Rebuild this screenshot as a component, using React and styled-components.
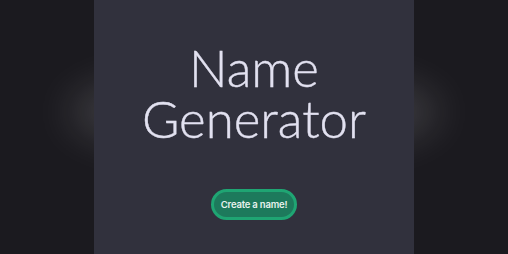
import React from 'react';
import styled, { createGlobalStyle } from 'styled-components';

const GlobalStyle = createGlobalStyle`
  html, body {
    margin: 0;
    padding: 0;
    background: #1b1a1f;
    height: 100%;
    overflow: hidden;
  }
  #root {
    height: 100%;
  }
`;

const Page = styled.div`
  position: relative;
  height: 254px;
  display: flex;
  justify-content: center;
  background: #1b1a1f;
`;

const Glow = styled.div`
  position: absolute;
  top: 70px;
  left: 50%;
  width: 370px;
  height: 84px;
  transform: translateX(-50%);
  border-radius: 50%;
  background: rgba(255, 255, 255, 0.16);
  filter: blur(20px);
`;

const Panel = styled.main`
  position: relative;
  width: 320px;
  background: #31313d;
  display: flex;
  flex-direction: column;
  align-items: center;
  padding-top: 42px;
  box-sizing: border-box;
`;

const Title = styled.h1`
  margin: 0;
  font-family: "Lato", "Noto Sans", sans-serif;
  font-weight: 300;
  font-size: 51px;
  line-height: 51px;
  color: #e2e1f0;
  text-align: center;
  letter-spacing: 0px;
  -webkit-text-stroke: 0.4px #e2e1f0;
`;

const Button = styled.button`
  margin-top: 45px;
  height: 31px;
  padding: 0 7px;
  border: 3px solid #1fa573;
  border-radius: 16px;
  background: #1d7a5c;
  color: #e8f2ee;
  font-family: "Inter", "Noto Sans", sans-serif;
  font-weight: 600;
  font-size: 9.5px;
  letter-spacing: -0.2px;
  cursor: pointer;
`;

export default function App() {
  return (
    <>
      <GlobalStyle />
      <Page>
        <Glow />
        <Panel>
          <Title>
            Name
            <br />
            Generator
          </Title>
          <Button>Create a name!</Button>
        </Panel>
      </Page>
    </>
  );
}
